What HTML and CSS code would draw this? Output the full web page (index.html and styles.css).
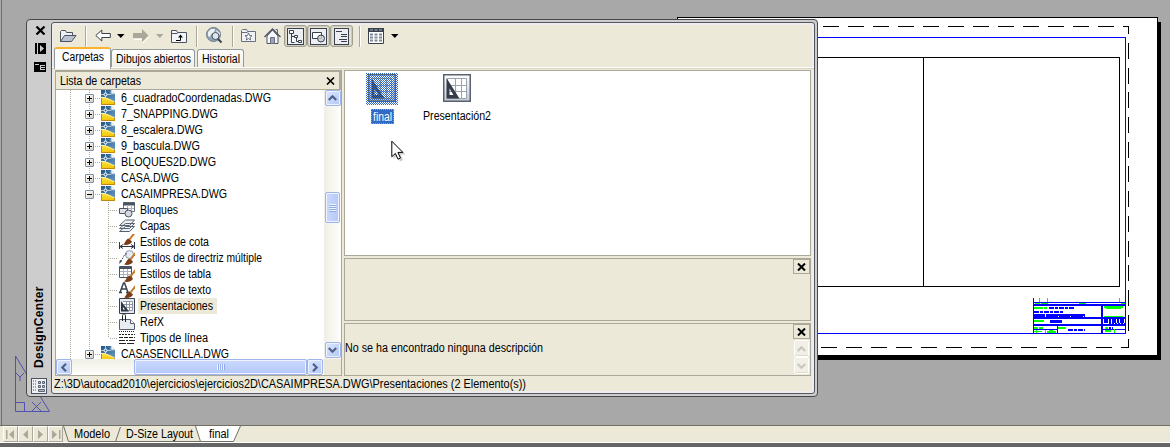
FILE: index.html
```html
<!DOCTYPE html>
<html lang="es">
<head>
<meta charset="utf-8">
<title>DesignCenter</title>
<link rel="stylesheet" href="styles.css">
</head>
<body>
<svg class="defs" width="0" height="0">
  <defs>
    <linearGradient id="sky" x1="0" y1="0" x2="1" y2="1"><stop offset="0" stop-color="#1f5585"/><stop offset="1" stop-color="#6d9cc4"/></linearGradient>
    <linearGradient id="gold" x1="0" y1="0" x2="0" y2="1"><stop offset="0" stop-color="#ffe44a"/><stop offset="1" stop-color="#f3c200"/></linearGradient>
    <linearGradient id="steel" x1="0" y1="0" x2="0" y2="1"><stop offset="0" stop-color="#fff"/><stop offset="1" stop-color="#c3c9d3"/></linearGradient>
    <pattern id="dither" width="2" height="2" patternUnits="userSpaceOnUse"><path fill="#316ac5" d="M0 0h1v1H0zM1 1h1v1H1z"/></pattern>
  </defs>
  <symbol id="dwg" viewBox="0 0 16 16">
    <path fill="url(#sky)" d="M0 0h10l4 4v9H0z"/><path fill="#fff" d="M10 0v4h4z"/><path d="M10 .5v3.500h3.500" stroke="#8fb0cb" fill="none"/>
    <path d="M4.500 0v8M0 4.500h10" stroke="#a9c6dd" fill="none"/><circle cx="4.500" cy="4.500" r="1.500" fill="#3c739f" stroke="#fff"/>
    <path fill="url(#gold)" d="M0 7c5 0 9 2 14 5v3H0z"/><path d="M0 7.300c5 0 9 2 14 5" stroke="#fff6c0" stroke-width=".8" fill="none"/>
    <path d="M.5 8v6.500h13V12" stroke="#b98a12" fill="none"/>
  </symbol>
  <symbol id="brush" viewBox="0 0 16 16">
    <path d="M9.500 8.500L14.500 2" stroke="#c7762a" stroke-width="2"/><path d="M3 13.500c2-1 2.500-5 5.500-6l3.500 3c-1 3-5.500 4-9 3z" fill="#7a3d16"/>
  </symbol>
  <symbol id="layout" viewBox="0 0 28 28">
    <rect x=".75" y=".75" width="26.500" height="26.500" fill="url(#steel)" stroke="#59616e" stroke-width="1.500"/>
    <path d="M4.500 4.500h19v20h-19zM12.500 4v20M18.500 4v20M5 11.500h19M5 17.500h19" fill="#fff" stroke="#9aa2af"/>
    <path fill="#353c49" fill-rule="evenodd" d="M3.500 4l13 20.500h-13zM6.500 14.500v6.500h4z"/>
  </symbol>
</svg>

<main class="desktop">
  <svg class="drawing" width="1170" height="425" viewBox="0 0 1170 425" shape-rendering="crispEdges">
    <path fill="#000" d="M682 22h479v338H682z"/>
    <path fill="#fff" stroke="#000" d="M677.500 17.500h480v338h-480z"/>
    <path fill="#000" d="M682 356h479v4H682z"/>
    <path fill="none" stroke="#000" stroke-dasharray="16 9" d="M823 26.500h306M821 347.500h308"/>
    <path fill="none" stroke="#000" stroke-dasharray="16 8.700" stroke-dashoffset="7.700" d="M1128.500 26v322"/>
    <path fill="none" stroke="#00f" d="M700 37.500h425.500v296H700"/>
    <path fill="none" stroke="#000" d="M700 57.500h419.500v229H700M923.500 57v229"/>
    <g stroke="#00f" fill="none">
      <path d="M1033.500 298v35M1033 302.500h92M1057.500 326v7M1033 329.500h24M1102 329.500h23"/>
      <path stroke-width="2" d="M1033 305h92M1033 318h92M1033 325h92M1102 304v29"/>
      <path stroke-width="2" stroke-dasharray="5 1 3 1" d="M1049 308h25M1034 312h29M1068 330h17"/>
      <path stroke-width="3" stroke-dasharray="11 1 12 1" d="M1034 315.500h51"/>
      <path stroke-width="3" d="M1050 321.500h12"/>
      <path stroke-width="4" stroke-dasharray="4 1 2 1" d="M1104 321h21"/>
      <path stroke-width="2" stroke-dasharray="2 1" d="M1109 324h17M1109 328h4M1034 315h50"/>
    </g>
    <g stroke="#0f0" fill="none">
      <path d="M1039.500 298v4M1047.500 298v4M1119.500 298v4M1035 303.500h5M1041 303.500h7M1079 303.500h7M1121 303.500h4M1104 316.500h19M1036.500 330v3M1045.500 330v3M1114.500 329v4"/>
      <path stroke-width="2" d="M1034 308h9M1044 308h3M1034 321h10M1058 328h8M1034 328h4M1039 328h4M1047 332h9M1104 307h19M1105 328h3M1105 331h6"/>
      <path d="M1106 308.500h15M1034 331.500h8M1049 330.500h4"/>
    </g>
    <g class="ucs" shape-rendering="auto">
      <path d="M15.500 356v55.500h34zM15.500 402.500h9v9M32 402l9 9M41 402l-9 9M16 373l4 4 4-4M20 377v4"/>
    </g>
    <path stroke="#707070" d="M1.500 0v425"/>
  </svg>

  <section class="palette">
    <aside class="strip">
      <svg class="s-close" width="11" height="9"><path d="M1.500.5l8 8M9.500.5l-8 8" stroke="#000" stroke-width="2.200"/></svg>
      <svg class="s-pin" width="11" height="11"><path d="M0 0h2v11H0zM3 0h8v11H3z"/><path d="M5 2l4 3.500L5 9z" fill="#cdcdcd"/></svg>
      <svg class="s-menu" width="12" height="10"><path d="M0 0h12v10H0z"/><path d="M1 2.500h4M7 3.500h4M7 5.500h4M7 7.500h4M6.500 3v5" stroke="#cdcdcd"/></svg>
      <div class="caption">DesignCenter</div>
      <svg class="s-logo" width="16" height="16"><rect x=".5" y=".5" width="15" height="15" fill="#eef0f4" stroke="#4b5362"/><path d="M2 3h3M2 6h3M2 9h3M2 12h3" stroke="#4b5362" stroke-dasharray="1 1"/><path d="M7.500 3.500h2v2h-2zM11.500 3.500h2v2h-2zM7.500 7.500h2v2h-2zM11.500 7.500h2v2h-2zM7.500 11.500h6v2h-6z" fill="#b8bfcb" stroke="#5b6475"/></svg>
    </aside>

    <div class="frame">
      <div class="toolbar">
        <svg class="i-open" width="18" height="14"><path d="M.5 11.500v-10l1-1h4l1 2h6v3" fill="#eef1f5" stroke="#4b5362"/><path d="M.5 11.500l4-6h11.500l-4.500 6z" fill="#b9c3d1" stroke="#4b5362"/></svg>
        <i class="sep"></i>
        <svg class="i-back" width="16" height="13"><path d="M.8 6.500l6-5.500v3.500h8.500v4H6.800V12z" fill="#fff" stroke="#39414e"/></svg>
        <svg class="i-dd1" width="8" height="4"><path d="M0 0h7.500L3.800 4z"/></svg>
        <svg class="i-fwd" width="17" height="14"><path d="M16.500 7.500L10 14v-3.500H1" stroke="#fff" fill="none"/><path d="M15.500 6.500L9 0v4H0v5h9v4z" fill="#aca899"/></svg>
        <svg class="i-dd2" width="8" height="4"><path d="M0 0h7.500L3.800 4z" fill="#aca899"/></svg>
        <svg class="i-up" width="16" height="13"><path d="M.5 12.500V.5h5l1 2h9v10z" fill="#f4f5f8" stroke="#4b5362"/><path d="M.5 3.500h6" stroke="#4b5362"/><path d="M5 10.500h4.500V6" stroke="#000" fill="none"/><path d="M7 7.500l2.500-3 2.500 3z"/></svg>
        <i class="sep"></i>
        <svg class="i-web" width="17" height="17"><circle cx="7.500" cy="7.500" r="7" fill="#8fa3b2" stroke="#6f7d8b"/><path d="M2 5l3-3 4 0-1 4-3 1-1 3-2-1zM10 3l4 3v2l-3-1z" fill="#edf3f3"/><circle cx="9.500" cy="9" r="3.500" fill="#dce7ee" stroke="#4b5362"/><path d="M12 12l3.500 3.500" stroke="#39414e" stroke-width="2"/></svg>
        <i class="sep"></i>
        <svg class="i-fav" width="16" height="13"><path d="M.5 12.500V1.500l1-1h4l1 2h8v10z" fill="#f0f2f5" stroke="#667080"/><path d="M.5 3.500h6" stroke="#667080"/><path d="M7.500 4l1 2.500 2.500.2-2 1.600.6 2.700-2.100-1.500L5.400 11 6 8.300 4 6.700l2.500-.2z" fill="#fff" stroke="#4b5362" stroke-width=".8"/></svg>
        <svg class="i-home" width="17" height="16"><path d="M11.500 1.500h2v5" fill="#ddd" stroke="#667080"/><path d="M3 8v7.500h11V8L8.500 2z" fill="#f7f8fa" stroke="#4b5362"/><path d="M.5 9l8-8 8 8" fill="none" stroke="#4b5362" stroke-width="1.300"/><path d="M6.500 9.500h4v6h-4z" fill="#9ca5b3" stroke="#667080"/></svg>
        <div class="toggles">
          <span><svg width="17" height="17"><rect x=".5" y=".5" width="16" height="16" fill="#eceef1" stroke="#39414e"/><path d="M2.500 2.500h4v3h-4zM7.500 7.500h3v2h-3zM11.500 12.500h3v2h-3zM4.500 6v8.500h3M4.500 8.500h3M9.500 10v3.500h2" fill="#fff" stroke="#39414e"/></svg></span>
          <span><svg width="17" height="17"><rect x=".5" y=".5" width="16" height="16" fill="#eceef1" stroke="#39414e"/><path d="M2.500 4.500h9v6h-9z" fill="#fff" stroke="#39414e"/><circle cx="11" cy="10.500" r="3.500" fill="#c7ccd5" fill-opacity=".8" stroke="#39414e"/></svg></span>
          <span><svg width="15" height="17"><rect x=".5" y=".5" width="14" height="16" fill="#eceef1" stroke="#39414e"/><path d="M2 3.500h6M7 6.500h6M7 8.500h6M5 11.500h8M7 13.500h6" stroke="#39414e"/></svg></span>
        </div>
        <i class="sep"></i>
        <svg class="i-views" width="16" height="16"><path d="M.5.500h15v15H.5z" fill="#fff" stroke="#39414e"/><path d="M0 0h16v4H0z" fill="#39414e"/><path d="M2 2h3M6.500 2h3M11 2h3" stroke="#aab2c0"/><path d="M2 6.500h3M6.500 6.500h3M11 6.500h3M2 9.500h3M6.500 9.500h3M11 9.500h3M2 12.500h3M6.500 12.500h3M11 12.500h3" stroke="#7d8796" stroke-width="2"/></svg>
        <svg class="i-dd1 i-dd3" width="8" height="4"><path d="M0 0h7.500L3.800 4z"/></svg>
      </div>

      <nav class="tabs">
        <div class="tab active"><span class="t" data-w="42">Carpetas</span></div>
        <div class="tab wide"><span class="t" data-w="75">Dibujos abiertos</span></div>
        <div class="tab last"><span class="t" data-w="38">Historial</span></div>
      </nav>

      <div class="body">
        <section class="folders">
          <header><span class="t" data-w="81">Lista de carpetas</span><svg width="9" height="8"><path d="M1 .5l7 7M8 .5l-7 7" stroke="#000" stroke-width="1.600"/></svg></header>
          <div class="treebox">
            <div class="tree">
              <div class="row"><b class="box plus"></b><svg><use href="#dwg" width="16" height="16"/></svg><span class="t" data-w="150">6_cuadradoCoordenadas.DWG</span></div>
              <div class="row"><b class="box plus"></b><svg><use href="#dwg" width="16" height="16"/></svg><span class="t" data-w="97">7_SNAPPING.DWG</span></div>
              <div class="row"><b class="box plus"></b><svg><use href="#dwg" width="16" height="16"/></svg><span class="t" data-w="82">8_escalera.DWG</span></div>
              <div class="row"><b class="box plus"></b><svg><use href="#dwg" width="16" height="16"/></svg><span class="t" data-w="79">9_bascula.DWG</span></div>
              <div class="row"><b class="box plus"></b><svg><use href="#dwg" width="16" height="16"/></svg><span class="t" data-w="95">BLOQUES2D.DWG</span></div>
              <div class="row"><b class="box plus"></b><svg><use href="#dwg" width="16" height="16"/></svg><span class="t" data-w="58">CASA.DWG</span></div>
              <div class="row"><b class="box"></b><svg><use href="#dwg" width="16" height="16"/></svg><span class="t" data-w="106">CASAIMPRESA.DWG</span></div>
              <div class="row child"><svg viewBox="0 0 16 16"><path d="M4.500.5h11v9h-11z" fill="#fff" stroke="#667080"/><path d="M4 2h12" stroke="#4b5362" stroke-width="3"/><path d="M5 6.500h10M8.500 3v6M12.500 3v6" stroke="#aab2c0"/><path d="M.5 6.500h8v5h-8z" fill="#dfe3e9" stroke="#4b5362"/><circle cx="9.500" cy="11.500" r="3.500" fill="#d5dae2" stroke="#4b5362"/></svg><span class="t" data-w="38">Bloques</span></div>
              <div class="row child"><svg viewBox="0 0 16 16"><path d="M.5 13.500l6-5h9l-5 5zM.5 10.500l6-5h9l-5 5zM.5 7.500l6-5.500h9l-5 5.500z" fill="#eef1f5" stroke="#59616e"/></svg><span class="t" data-w="30">Capas</span></div>
              <div class="row child"><svg viewBox="0 0 16 16"><use href="#brush" x="1" y="-3" width="16" height="16"/><path d="M.5 8v7M15.500 8v7M1 12.500h14M4 10.500l-3 2 3 2M12 10.500l3 2-3 2" stroke="#303744" fill="none"/></svg><span class="t" data-w="69">Estilos de cota</span></div>
              <div class="row child"><svg viewBox="0 0 16 16"><circle cx="10.500" cy="4.500" r="4" fill="#e8ecf2" stroke="#8d98a9"/><path d="M8 4H6l-5 9" stroke="#4b5362" stroke-dasharray="2 1" fill="none"/><path d="M0 14l1-4 2 1z" fill="#303744"/><use href="#brush" x="2" y="1" width="16" height="16"/></svg><span class="t" data-w="122">Estilos de directriz múltiple</span></div>
              <div class="row child"><svg viewBox="0 0 16 16"><path d="M.5.500h12v11H.5z" fill="#fff" stroke="#4b5362"/><path d="M0 2h13" stroke="#4b5362" stroke-width="2"/><path d="M1 5.500h11M1 8.500h11M4.500 3v8M8.500 3v8" stroke="#aab2c0"/><use href="#brush" x="2" y="2" width="16" height="16"/></svg><span class="t" data-w="71">Estilos de tabla</span></div>
              <div class="row child"><svg viewBox="0 0 16 16"><path d="M1 10.500L4.500 1h1L9 10.500M2.500 7h5M0 10.500h3M7 10.500h4" fill="none" stroke="#39414e" stroke-width="1.500"/><use href="#brush" x="2" y="2" width="16" height="16"/></svg><span class="t" data-w="71">Estilos de texto</span></div>
              <div class="row child sel"><svg viewBox="0 0 16 16"><path d="M.5.500h15v15H.5z" fill="#e8ebf0" stroke="#39414e"/><path d="M4 3.500h9.500v9H4M7.500 3v10M10.500 3v10M5 6.500h9M5 9.500h9" stroke="#8d96a5" fill="#fff"/><path fill="#303744" d="M2 3l8 10.500H2z"/><path d="M4 9v2.500h2z" fill="#fff"/></svg><span class="t" data-w="73">Presentaciones</span></div>
              <div class="row child"><svg viewBox="0 0 16 16"><path d="M.5 15.500V5.500h11l4 4v6z" fill="#e8ebf0" stroke="#59616e"/><path d="M11.500 5.500v4h4" fill="#fff" stroke="#59616e"/><path d="M3.500 7V1.500c0-2 3-2 3 0V8" fill="none" stroke="#222"/></svg><span class="t" data-w="24">RefX</span></div>
              <div class="row child end"><svg viewBox="0 0 16 16"><path d="M0 1.500h16" stroke="#222" stroke-dasharray="1 1"/><path d="M0 4.500h16" stroke="#222" stroke-dasharray="2 1"/><path d="M0 7.500h16" stroke="#222" stroke-dasharray="4 1"/><path d="M0 10.500h16" stroke="#222" stroke-dasharray="6 1 2 1"/><path d="M0 13.500h16" stroke="#222" stroke-dasharray="7 1"/></svg><span class="t" data-w="68">Tipos de línea</span></div>
              <div class="row tail"><b class="box plus"></b><svg><use href="#dwg" width="16" height="16"/></svg><span class="t" data-w="108">CASASENCILLA.DWG</span></div>
            </div>
            <div class="vbar">
              <i class="btn"><svg width="9" height="6"><path d="M.8 5l3.700-3.700L8.200 5"/></svg></i>
              <i class="thumb"></i>
              <i class="btn"><svg width="9" height="6"><path d="M.8 1l3.700 3.700L8.200 1"/></svg></i>
            </div>
          </div>
          <div class="hbar">
            <i class="btn"><svg width="6" height="9"><path d="M5 .8L1.300 4.500 5 8.200"/></svg></i>
            <i class="thumb"></i>
            <i class="btn"><svg width="6" height="9"><path d="M1 .8l3.700 3.700L1 8.200"/></svg></i>
          </div>
        </section>

        <div class="panes">
          <section class="items">
            <figure class="first"><svg width="32" height="32"><use href="#layout" x="2" y="1" width="28" height="28"/><rect width="32" height="32" fill="url(#dither)"/></svg><figcaption class="picked"><span class="t" data-w="19">final</span></figcaption></figure>
            <figure class="second"><svg width="28" height="29"><use href="#layout" width="28" height="28"/></svg><figcaption><span class="t" data-w="68">Presentación2</span></figcaption></figure>
          </section>
          <section class="preview"><i class="x"><svg width="9" height="8"><path d="M1 .5l7 7M8 .5l-7 7"/></svg></i></section>
          <section class="desc">
            <span class="t" data-w="198">No se ha encontrado ninguna descripción</span>
            <div class="side"><i class="x"><svg width="9" height="8"><path d="M1 .5l7 7M8 .5l-7 7"/></svg></i>
              <i class="off"><svg width="9" height="6"><path d="M.8 5l3.700-3.700L8.200 5"/></svg></i><i class="off"><svg width="9" height="6"><path d="M.8 1l3.700 3.700L8.200 1"/></svg></i></div>
          </section>
        </div>
      </div>
      <footer><span class="t" data-w="472">Z:\3D\autocad2010\ejercicios\ejercicios2D\CASAIMPRESA.DWG\Presentaciones (2 Elemento(s))</span></footer>
    </div>
  </section>

  <svg class="cursor" width="15" height="23"><path d="M2.500 3v16l4-3.500 2.500 6 3-1.500-2.500-5.500h5z" fill="#999" opacity=".5"/><path d="M.8 1.200v15.600l3.600-3.400 2.600 5.800 2.500-1.200-2.600-5.600h5z" fill="#fff" stroke="#000"/></svg>
</main>

<div class="layouts">
  <div class="nav">
    <i><svg width="10" height="9"><path d="M0 0h1.500v9H0zM8 0v9L3 4.500z"/></svg></i><i><svg width="6" height="9"><path d="M5 0v9L0 4.500z"/></svg></i><i><svg width="6" height="9"><path d="M0 0v9l5-4.500z"/></svg></i><i><svg width="10" height="9"><path d="M8 0h1.500v9H8zM1 0v9l5-4.500z"/></svg></i>
  </div>
  <div class="sheets">
    <svg width="180" height="17"><path d="M132.500 0l5 15.500h33L177.500 0z" fill="#fff"/><path d="M.5 0l5 15.500h47L57.500 1M52.500 15.500h85M132.500 0l5 15.500h33L177.500 0" fill="none" stroke="#716f64"/></svg>
    <span class="t n1" data-w="36">Modelo</span><span class="t n2" data-w="67">D-Size Layout</span><span class="t n3" data-w="20">final</span>
  </div>
</div>
<div class="edge"></div>
<script src="labels.js"></script>
</body>
</html>
```
FILE: labels.js
```js
// Condense each label to its declared width, keeping the glyph height.
document.querySelectorAll('.t').forEach(function (el) {
  var want = Number(el.dataset.w);
  var have = el.getBoundingClientRect().width;
  el.style.transform = 'scaleX(' + (want / have) + ')';
  el.style.marginRight = (want - have) + 'px';
});
```
FILE: styles.css
```css
* { box-sizing: border-box; }
html, body { margin: 0; height: 447px; overflow: hidden; }
body { display: flex; flex-direction: column; background: #a8a8a8; font: 12px/16px "Liberation Sans", Arial, sans-serif; color: #000; }
svg { display: block; flex: none; }
i, b { display: block; flex: none; }
.defs { position: absolute; }
.t { display: inline-block; flex: none; white-space: nowrap; transform-origin: 0 50%; }

.desktop { position: relative; height: 425px; flex: none; background: #a8a8a8; }
.ucs { fill: none; stroke: #5151b4; }
.palette { position: absolute; left: 26px; top: 19px; width: 792px; height: 378px; display: flex; background: #cdcdcd; border: 1px solid #48484a; border-radius: 4px; padding: 2px 2px 2px 0; }
.strip { width: 24px; flex: none; display: flex; flex-direction: column; }
.s-close { margin: 4px 0 0 8px; }
.s-pin { margin: 8px 0 0 8px; }
.s-menu { margin: 8px 0 0 7px; }
.caption { writing-mode: vertical-rl; transform: rotate(180deg); font-weight: bold; font-size: 12px; line-height: 14px; width: 14px; height: 84px; margin: 213px 0 0 5px; letter-spacing: .3px; white-space: nowrap; }
.s-logo { margin: 10px 0 0 4px; }

.frame { flex: 1; display: flex; flex-direction: column; background: #ece9d8; border: 1px solid #55565c; border-radius: 3px; box-shadow: inset 0 2px #eeeef0, inset -2px 0 #eeeef0, inset 1px 0 #eeeef0, inset 0 -2px #eeeef0; }

.toolbar { height: 24px; flex: none; display: flex; align-items: flex-start; }
.sep { width: 2px; height: 21px; margin: 3px -1px 0 9px; background: linear-gradient(90deg, #aca899 50%, #fff 50%); }
.i-open { margin: 7px -2px 0 8px; }
.i-back { margin: 6px 0 0 9px; }
.i-dd1 { margin: 11px 0 0 6px; }
.i-fwd { margin: 6px -1px 0 8px; }
.i-dd2 { margin: 11px 0 0 7px; }
.i-up { margin: 7px 0 0 7px; }
.i-web { margin: 4px 0 0 9px; }
.i-fav { margin: 6px 0 0 8px; }
.i-home { margin: 5px 0 0 7px; }
.toggles { display: flex; margin: 2px -3px 0 3px; }
.toggles span { width: 23px; height: 22px; display: flex; align-items: center; justify-content: center; border: 1px solid #a19f91; border-radius: 3px; background: #e4e1d3; box-shadow: inset 0 0 0 1px #cfccbe; }
.i-views { margin: 5px 0 0 8px; }
.i-dd3 { margin-left: 7px; }

.tabs { height: 23px; flex: none; display: flex; align-items: flex-start; padding-left: 2px; border-bottom: 1px solid #ece9d8; background: linear-gradient(#d8d4c2, #d8d4c2) 0 21px / 100% 1px no-repeat, linear-gradient(#fff, #fff) 0 20px / 100% 1px no-repeat; }
.tab { height: 18px; margin: 2px 2px 0 0; border: 1px solid #919b9c; border-bottom: 0; border-radius: 3px 3px 0 0; background: linear-gradient(#fff, #f0eee6); padding: 1px 0 0 4px; }
.tab.active { width: 57px; height: 22px; margin: 0; border-top: 2px solid #ffb22e; background: #fcfcfe; padding: 0 0 0 7px; line-height: 17px; }
.tab.wide { width: 84px; margin-left: 0; }
.tab.last { width: 47px; }

.body { height: 306px; flex: none; display: grid; grid-template-columns: 287px 467px; column-gap: 2px; padding-left: 3px; }
.folders { border: 1px solid #aca899; display: flex; flex-direction: column; min-width: 0; }
.folders header { height: 20px; flex: none; display: flex; align-items: center; justify-content: space-between; padding: 1px 4px 0 4px; border: 1px solid #aca899; border-width: 2px 2px 1px 0; margin-top: -1px; }
.treebox { height: 269px; flex: none; display: flex; }
.tree { width: 268px; height: 269px; overflow: hidden; background: repeating-linear-gradient(#aca899 0 1px, #fff 1px 2px) 14px 0 / 1px 100% no-repeat, repeating-linear-gradient(#aca899 0 1px, #fff 1px 2px) 33px 0 / 1px 100% no-repeat, #fff; }
.row { height: 16px; display: flex; align-items: center; padding-left: 29px; background: repeating-linear-gradient(90deg, #aca899 0 1px, #fff 1px 2px) 39px 8px / 6px 1px no-repeat; }
.row svg { width: 16px; height: 16px; margin: 0 5px 0 7px; }
.row .t { margin-left: -1px; }
.tail .t { line-height: 10px; }
.box { width: 9px; height: 9px; border: 1px solid #7b8ea8; border-radius: 1px; background: linear-gradient(#000, #000) 1px 3px / 5px 1px no-repeat, linear-gradient(135deg, #fff, #d6d1c4); }
.box.plus { background: linear-gradient(#000, #000) 1px 3px / 5px 1px no-repeat, linear-gradient(#000, #000) 3px 1px / 1px 5px no-repeat, linear-gradient(135deg, #fff, #d6d1c4); }
.child { padding-left: 56px; background: repeating-linear-gradient(#aca899 0 1px, #fff 1px 2px) 52px 0 / 1px 100% no-repeat, repeating-linear-gradient(90deg, #aca899 0 1px, #fff 1px 2px) 54px 8px / 8px 1px no-repeat; }
.child.end { background-size: 1px 8px, 8px 1px; }
.child .t { margin-left: 0; }
.child.sel { background: repeating-linear-gradient(#aca899 0 1px, #fff 1px 2px) 52px 0 / 1px 100% no-repeat, repeating-linear-gradient(90deg, #aca899 0 1px, #fff 1px 2px) 54px 8px / 8px 1px no-repeat, linear-gradient(#ece9d8, #ece9d8) 82px 0 / 79px 100% no-repeat; }

.vbar { width: 17px; display: flex; flex-direction: column; align-items: center; background: linear-gradient(90deg, #f0efe6, #fefefb); }
.btn, .thumb { background: linear-gradient(135deg, #dbe6ff, #b4c8f6); border: 1px solid #9db5ea; border-radius: 2px; box-shadow: inset 0 0 0 1px #eef3ff; }
.btn { width: 16px; height: 16px; display: grid; place-items: center; }
.btn path { fill: none; stroke: #4d6185; stroke-width: 2.200; }
.vbar .thumb { width: 15px; height: 31px; margin: 86px 0 119px; background: repeating-linear-gradient(#eef4ff 0 1px, #8fabe8 1px 2px) 3px 11px / 7px 8px no-repeat, linear-gradient(90deg, #ccd9fd, #b4c8f8); }
.hbar { height: 16px; width: 268px; display: flex; background: linear-gradient(#f0efe6, #fefefb); }
.hbar .thumb { width: 173px; height: 16px; margin-left: 62px; background: repeating-linear-gradient(90deg, #eef4ff 0 1px, #8fabe8 1px 2px) 82px 4px / 8px 6px no-repeat, linear-gradient(#ccd9fd, #b4c8f8); }

.panes { display: grid; grid-template-rows: 186px 63px 53px; row-gap: 2px; }
.items, .preview, .desc { border: 1px solid #aca899; min-height: 0; }
.items { background: #fff; display: flex; align-items: flex-start; padding: 2px 0 0 21px; }
figure { margin: 0; display: flex; flex-direction: column; align-items: center; }
.first { width: 32px; }
.second { width: 70px; margin: 1px 0 0 24px; }
.picked { width: 23px; height: 15px; margin-top: 4px; padding-left: 1px; background: #316ac5; color: #fff; border: 1px dotted #e0943a; line-height: 14px; }
.second figcaption { margin-top: 5px; }
.preview { display: flex; justify-content: flex-end; }
.x { width: 17px; height: 15px; border: 1px solid #aca899; display: grid; place-items: center; }
.x path { stroke: #000; stroke-width: 2; }
.desc { display: flex; justify-content: space-between; padding-left: 0; }
.desc > .t { padding-top: 16px; }
.side { width: 17px; display: flex; flex-direction: column; }
.off { width: 15px; height: 17px; border: 1px solid #fff; border-radius: 2px; background: #f1efe6; box-shadow: inset 0 -1px #dedbcd; display: grid; place-items: center; margin-left: 1px; }
.side .x { margin-bottom: 1px; }
.off path { fill: none; stroke: #c9c7ba; stroke-width: 2.200; }
.frame footer { padding-left: 2px; height: 17px; line-height: 16px; flex: none; }
.cursor { position: absolute; left: 391px; top: 140px; }

.layouts { height: 18px; flex: none; display: flex; background: #ece9d8; border-top: 1px solid #716f64; border-bottom: 1px solid #fff; padding-left: 3px; }
.nav { display: flex; }
.nav i { width: 15px; height: 16px; border: 1px solid; border-color: #fff #aca899 #aca899 #fff; display: grid; place-items: center; }
.nav path { fill: #aca899; }
.sheets { display: grid; grid-template-columns: 180px; }
.sheets > * { grid-area: 1 / 1; justify-self: start; }
.n1 { margin-left: 11px; }
.n2 { margin-left: 63px; }
.n3 { margin-left: 146px; }
.edge { flex: 1; background: #656565; }
```
